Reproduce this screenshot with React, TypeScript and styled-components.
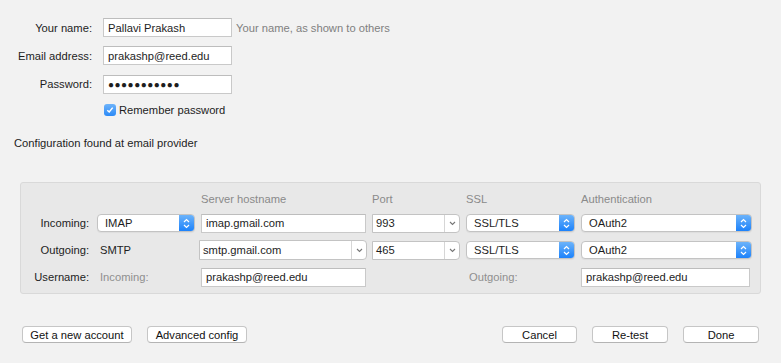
import styled, { createGlobalStyle } from 'styled-components'

const GlobalStyle = createGlobalStyle`
  html, body {
    margin: 0;
    padding: 0;
    background: #f2f2f2;
  }
  body {
    font-family: 'Liberation Sans', Arial, sans-serif;
    font-size: 11.2px;
    color: #1d1d1d;
  }
`

const Page = styled.div`
  width: 781px;
  height: 363px;
  background: #f2f2f2;
  display: flex;
  flex-direction: column;
  overflow: hidden;
`

const AccountForm = styled.div`
  display: grid;
  grid-template-columns: 92px 129px auto;
  grid-template-rows: 19px 19px 20px 14px;
  column-gap: 11px;
  row-gap: 9px;
  padding-top: 18px;
  align-items: center;
`

const Label = styled.label`
  text-align: right;
  white-space: nowrap;
`

const Hint = styled.span`
  color: #808080;
  margin-left: -7px;
  white-space: nowrap;
`

const TextInput = styled.div<{ width?: number }>`
  box-sizing: border-box;
  height: 19px;
  ${({ width }) => (width ? `width: ${width}px;` : '')}
  background: #fff;
  border: 1px solid #c9c9c9;
  border-top-color: #bdbdbd;
  padding: 0 4px;
  display: flex;
  align-items: center;
  white-space: nowrap;
  overflow: hidden;
`

const Dots = styled.span`
  font-size: 10px;
  letter-spacing: 0.5px;
`

const CheckRow = styled.div`
  grid-column: 2 / 4;
  display: flex;
  align-items: center;
  gap: 3px;
  margin-left: 1px;
`

const CheckBox = styled.span`
  width: 12px;
  height: 12px;
  border-radius: 3px;
  background: linear-gradient(#6db3fa, #2b8af7);
  display: flex;
  align-items: center;
  justify-content: center;
`

const Status = styled.div`
  margin: 19px 0 0 14px;
  height: 15px;
  line-height: 15px;
`

const Panel = styled.div`
  margin: 31px 0 0 20px;
  width: 741px;
  box-sizing: border-box;
  background: #e8e8e8;
  border: 1px solid #d9d9d9;
  border-radius: 3px;
  padding: 7px 0 6px 0;
  display: grid;
  grid-template-columns: 70px 98px 165px 88px 109px 171px;
  grid-template-rows: 16px 20px 20px 20px;
  column-gap: 6px;
  row-gap: 7px;
  align-items: center;
`

const ColHead = styled.span`
  color: #8a8a8a;
  align-self: end;
  line-height: 13px;
`

const RowLabel = styled.span`
  text-align: right;
  padding-right: 2px;
`

const Plain = styled.span<{ muted?: boolean }>`
  color: ${({ muted }) => (muted ? '#8f8f8f' : '#1d1d1d')};
  padding-left: 3px;
`

const PopUp = styled.div`
  box-sizing: border-box;
  height: 18px;
  display: flex;
  align-items: stretch;
  background: #fff;
  border: 1px solid #c3c3c3;
  border-radius: 4px;
  box-shadow: 0 1px 1px rgba(0, 0, 0, 0.05);
  overflow: hidden;
`

const PopText = styled.span`
  flex: 1;
  display: flex;
  align-items: center;
  padding-left: 7px;
`

const Stepper = styled.span`
  width: 15px;
  background: linear-gradient(#6cb3fa, #1c82fb);
  display: flex;
  align-items: center;
  justify-content: center;
`

const Combo = styled.div<{ wide?: boolean }>`
  box-sizing: border-box;
  height: ${({ wide }) => (wide ? '20px' : '19px')};
  ${({ wide }) => (wide ? 'margin: 0 -1px 0 -2px;' : '')}
  display: flex;
  align-items: stretch;
  background: #fff;
  border: 1px solid #c3c3c3;
  border-radius: 0 4px 4px 0;
  overflow: hidden;
`

const ComboText = styled.span`
  flex: 1;
  display: flex;
  align-items: center;
  padding-left: 3px;
`

const ComboButton = styled.span`
  width: 14px;
  border-left: 1px solid #d6d6d6;
  display: flex;
  align-items: center;
  justify-content: center;
`

const Footer = styled.div`
  display: flex;
  align-items: center;
  padding: 0 22px;
  margin-top: 32px;
  gap: 15px;
`

const Spacer = styled.div`
  flex: 1;
`

const Button = styled.button<{ w: number }>`
  box-sizing: border-box;
  width: ${({ w }) => w}px;
  height: 17px;
  padding: 0;
  font-family: inherit;
  font-size: 11.2px;
  color: #111;
  background: #fff;
  border: 1px solid #c6c6c6;
  border-bottom-color: #b4b4b4;
  border-radius: 4px;
  display: flex;
  align-items: center;
  justify-content: center;
`

const StepIcon = () => (
  <svg width="7" height="11" viewBox="0 0 7 11">
    <path d="M1 4 L3.5 1.5 L6 4 M1 7 L3.5 9.5 L6 7" fill="none" stroke="#fff" strokeWidth="1.2" />
  </svg>
)

const ChevronIcon = () => (
  <svg width="7" height="5" viewBox="0 0 7 5">
    <path d="M1 1 L3.5 3.5 L6 1" fill="none" stroke="#777" strokeWidth="1.1" />
  </svg>
)

const Select = ({ value }: { value: string }) => (
  <PopUp>
    <PopText>{value}</PopText>
    <Stepper>
      <StepIcon />
    </Stepper>
  </PopUp>
)

const ComboBox = ({ value, wide }: { value: string; wide?: boolean }) => (
  <Combo wide={wide}>
    <ComboText>{value}</ComboText>
    <ComboButton>
      <ChevronIcon />
    </ComboButton>
  </Combo>
)

const App = () => {
  return (
    <Page>
      <GlobalStyle />
      <AccountForm>
        <Label>Your name:</Label>
        <TextInput>Pallavi Prakash</TextInput>
        <Hint>Your name, as shown to others</Hint>

        <Label>Email address:</Label>
        <TextInput>prakashp@reed.edu</TextInput>
        <span />

        <Label>Password:</Label>
        <TextInput>
          <Dots>●●●●●●●●●●●</Dots>
        </TextInput>
        <span />

        <span />
        <CheckRow>
          <CheckBox>
            <svg width="8" height="8" viewBox="0 0 8 8">
              <path d="M1.3 4.2 L3.2 6 L6.7 1.6" fill="none" stroke="#fff" strokeWidth="1.5" />
            </svg>
          </CheckBox>
          Remember password
        </CheckRow>
      </AccountForm>

      <Status>Configuration found at email provider</Status>

      <Panel>
        <span />
        <span />
        <ColHead>Server hostname</ColHead>
        <ColHead>Port</ColHead>
        <ColHead>SSL</ColHead>
        <ColHead>Authentication</ColHead>

        <RowLabel>Incoming:</RowLabel>
        <Select value="IMAP" />
        <TextInput>imap.gmail.com</TextInput>
        <ComboBox value="993" />
        <Select value="SSL/TLS" />
        <Select value="OAuth2" />

        <RowLabel>Outgoing:</RowLabel>
        <Plain>SMTP</Plain>
        <ComboBox value="smtp.gmail.com" wide />
        <ComboBox value="465" />
        <Select value="SSL/TLS" />
        <Select value="OAuth2" />

        <RowLabel>Username:</RowLabel>
        <Plain muted>Incoming:</Plain>
        <TextInput>prakashp@reed.edu</TextInput>
        <span />
        <Plain muted>Outgoing:</Plain>
        <TextInput width={169}>prakashp@reed.edu</TextInput>
      </Panel>

      <Footer>
        <Button w={110}>Get a new account</Button>
        <Button w={100}>Advanced config</Button>
        <Spacer />
        <Button w={75}>Cancel</Button>
        <Button w={76}>Re-test</Button>
        <Button w={76}>Done</Button>
      </Footer>
    </Page>
  )
}

export default App
